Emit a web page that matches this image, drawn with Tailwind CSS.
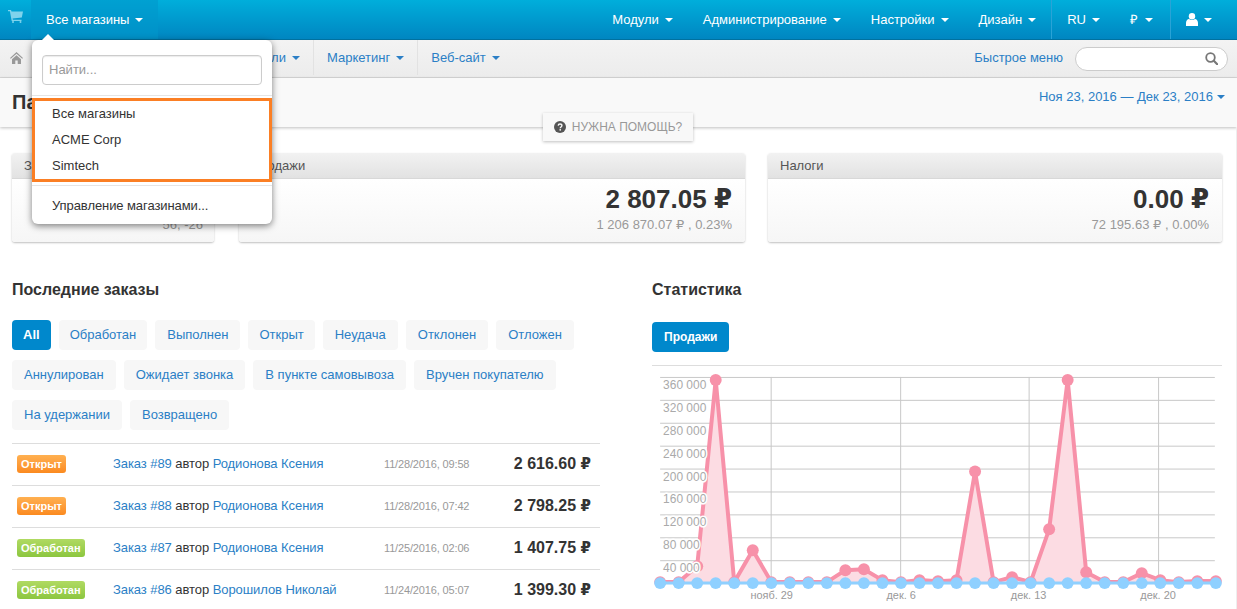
<!DOCTYPE html>
<html lang="ru">
<head>
    <meta charset="UTF-8">
    <title>Панель управления</title>
    <script src="https://cdn.jsdelivr.net/npm/@tailwindcss/browser@4"></script>
</head>
<body class="relative h-[609px] overflow-hidden bg-white font-['Liberation_Sans',Arial,sans-serif] text-[13px] text-[#333]">
    <!-- Top bar -->
    <div class="flex h-10 items-stretch justify-between border-b border-[#00719f] bg-gradient-to-b from-[#00aedb] to-[#0086c1] text-white">
        <div class="flex items-stretch">
            <div class="flex w-[31px] items-start justify-center pt-[10px]">
                <svg class="h-[13px] w-[15px] text-[#7fd3ec]" viewBox="0 0 15 13" fill="currentColor"><path d="M0 0h3l.5 1.500H15l-1.200 6L4.600 8.600l.3 1.100H13.500V11H3.700L1.900 1.300H0z"/><circle cx="5" cy="12" r="1"/><circle cx="12.500" cy="12" r="1"/></svg>
            </div>
            <div class="flex w-[127px] items-center bg-[#0098cb]/60 pl-[15px]">
                Все магазины
                <span class="ml-[6px] inline-block border-x-[4px] border-t-[4px] border-x-transparent border-t-white"></span>
            </div>
        </div>
        <div class="flex items-stretch pr-[10px]">
            <div class="flex items-center px-[15px]">Модули<span class="ml-[6px] inline-block border-x-[4px] border-t-[4px] border-x-transparent border-t-white"></span></div>
            <div class="flex items-center px-[15px]">Администрирование<span class="ml-[6px] inline-block border-x-[4px] border-t-[4px] border-x-transparent border-t-white"></span></div>
            <div class="flex items-center px-[15px]">Настройки<span class="ml-[6px] inline-block border-x-[4px] border-t-[4px] border-x-transparent border-t-white"></span></div>
            <div class="flex items-center px-[15px]">Дизайн<span class="ml-[6px] inline-block border-x-[4px] border-t-[4px] border-x-transparent border-t-white"></span></div>
            <div class="flex items-center border-l border-[#2aa3d6] pl-[15px] pr-[13px]">RU<span class="ml-[6px] inline-block border-x-[4px] border-t-[4px] border-x-transparent border-t-white"></span></div>
            <div class="flex items-center pl-[17px] pr-[17px]">₽<span class="ml-[7px] inline-block border-x-[4px] border-t-[4px] border-x-transparent border-t-white"></span></div>
            <div class="flex items-center border-l border-[#2aa3d6] px-[15px]">
                <svg class="h-[13px] w-[12px]" viewBox="0 0 12 13" fill="currentColor"><circle cx="6" cy="3.300" r="3.200"/><path d="M0 13v-3C0 7.800 1.400 6 3 6c.8.700 1.800 1 3 1s2.200-.3 3-1c1.600 0 3 1.800 3 4v3z"/></svg>
                <span class="ml-[6px] inline-block border-x-[4px] border-t-[4px] border-x-transparent border-t-white"></span>
            </div>
        </div>
    </div>

    <!-- Sub nav -->
    <div class="flex h-[38px] items-stretch justify-between border-b border-[#d8d8d8] bg-gradient-to-b from-[#f3f3f3] to-[#ececec] pb-[2px] text-[#2b7fc6]">
        <div class="flex items-stretch">
            <div class="flex w-[314px] items-center justify-between border-r border-[#e2e2e2] pl-[10px] pr-[13px]">
                <svg class="h-[12px] w-[13px] text-[#999]" viewBox="0 0 13 12" fill="currentColor"><path d="M6.500 0 13 6l-.8.800L6.500 1.700.8 6.800 0 6z"/><path d="M2 7.200 6.500 3.200l4.500 4V12H7.700V8.500H5.300V12H2z"/></svg>
                <span>Заказы</span>
                <span>Товары</span>
                <span class="flex items-center">Покупатели<span class="ml-[6px] inline-block border-x-[4px] border-t-[4px] border-x-transparent border-t-[#2b7fc6]"></span></span>
            </div>
            <div class="flex items-center border-r border-[#e2e2e2] px-[13px]">Маркетинг<span class="ml-[6px] inline-block border-x-[4px] border-t-[4px] border-x-transparent border-t-[#2b7fc6]"></span></div>
            <div class="flex items-center px-[13px]">Веб-сайт<span class="ml-[6px] inline-block border-x-[4px] border-t-[4px] border-x-transparent border-t-[#2b7fc6]"></span></div>
        </div>
        <div class="flex items-center pr-[9px] pt-[2px]">
            <span class="mb-[2px] mr-3">Быстрое меню</span>
            <div class="flex h-[24px] w-[153px] items-center justify-end rounded-full border border-[#ccc] bg-white pr-[9px]">
                <svg class="h-[13px] w-[13px] text-[#777]" viewBox="0 0 13 13" fill="none" stroke="currentColor"><circle cx="5.500" cy="5.500" r="4.300" stroke-width="1.800"/><path d="m8.800 8.800 3.400 3.400" stroke-width="2.200" stroke-linecap="round"/></svg>
            </div>
        </div>
    </div>

    <!-- Page title -->
    <div class="flex h-[49px] items-start justify-between bg-[#f9f9f9] pl-3 pr-[12px] shadow-[0_1px_3px_rgba(0,0,0,0.25)]">
        <h1 class="mt-[12px] text-[20px] font-bold leading-6">Панель управления</h1>
        <div class="mt-[9px] flex items-center text-[#2b7fc6]">Ноя 23, 2016 — Дек 23, 2016<span class="ml-[4px] inline-block border-x-[4px] border-t-[4px] border-x-transparent border-t-[#2b7fc6]"></span></div>
    </div>

    <!-- Stat cards -->
    <div class="mt-[26px] flex pl-3 pr-[15px]">
        <div class="h-[89px] w-[202px] overflow-hidden rounded-[3px] shadow-[0_1px_2px_rgba(0,0,0,0.25)]">
            <div class="flex h-[26px] items-center border-b border-[#d8d8d8] bg-gradient-to-b from-[#f2f2f2] to-[#e2e2e2] px-3 text-[#555]">Заказы</div>
            <div class="h-[63px] bg-gradient-to-b from-white to-[#f6f6f6] px-[11px] pt-[2px] text-right">
                <div class="text-[26px] font-bold leading-[36px]">4</div>
                <div class="leading-4 text-[#999]">56, -26</div>
            </div>
        </div>
        <div class="ml-[25px] h-[89px] w-[506px] overflow-hidden rounded-[3px] shadow-[0_1px_2px_rgba(0,0,0,0.25)]">
            <div class="flex h-[26px] items-center border-b border-[#d8d8d8] bg-gradient-to-b from-[#f2f2f2] to-[#e2e2e2] px-3 text-[#555]">Продажи</div>
            <div class="h-[63px] bg-gradient-to-b from-white to-[#f6f6f6] px-[13px] pt-[2px] text-right">
                <div class="text-[26px] font-bold leading-[36px]">2 807.05 <span class="font-['DejaVu_Sans',sans-serif]">₽</span></div>
                <div class="leading-4 text-[#999]">1 206 870.07 <span class="font-['DejaVu_Sans',sans-serif]">₽</span> , 0.23%</div>
            </div>
        </div>
        <div class="ml-[23px] h-[89px] flex-1 overflow-hidden rounded-[3px] shadow-[0_1px_2px_rgba(0,0,0,0.25)]">
            <div class="flex h-[26px] items-center border-b border-[#d8d8d8] bg-gradient-to-b from-[#f2f2f2] to-[#e2e2e2] px-3 text-[#555]">Налоги</div>
            <div class="h-[63px] bg-gradient-to-b from-white to-[#f6f6f6] px-[13px] pt-[2px] text-right">
                <div class="text-[26px] font-bold leading-[36px]">0.00 <span class="font-['DejaVu_Sans',sans-serif]">₽</span></div>
                <div class="leading-4 text-[#999]">72 195.63 <span class="font-['DejaVu_Sans',sans-serif]">₽</span> , 0.00%</div>
            </div>
        </div>
    </div>

    <!-- Two columns -->
    <div class="mt-[38px] flex pl-3 pr-[15px]">
        <div class="w-[588px]">
            <h2 class="text-base font-bold leading-[20px]">Последние заказы</h2>
            <div class="mt-[20px] flex w-[588px] flex-wrap gap-x-2 gap-y-[10px] text-[#2b7fc6]">
                <span class="flex h-[30px] items-center rounded bg-[#0088cc] px-[11px] font-bold text-white">All</span>
                <span class="flex h-[30px] items-center rounded bg-[#f7f7f7] px-[11px]">Обработан</span>
                <span class="flex h-[30px] items-center rounded bg-[#f7f7f7] px-3">Выполнен</span>
                <span class="flex h-[30px] items-center rounded bg-[#f7f7f7] px-[11px]">Открыт</span>
                <span class="flex h-[30px] items-center rounded bg-[#f7f7f7] px-3">Неудача</span>
                <span class="flex h-[30px] items-center rounded bg-[#f7f7f7] px-3">Отклонен</span>
                <span class="flex h-[30px] items-center rounded bg-[#f7f7f7] px-3">Отложен</span>
                <span class="flex h-[30px] items-center rounded bg-[#f7f7f7] px-3">Аннулирован</span>
                <span class="flex h-[30px] items-center rounded bg-[#f7f7f7] px-3">Ожидает звонка</span>
                <span class="flex h-[30px] items-center rounded bg-[#f7f7f7] px-3">В пункте самовывоза</span>
                <span class="flex h-[30px] items-center rounded bg-[#f7f7f7] px-3">Вручен покупателю</span>
                <span class="flex h-[30px] items-center rounded bg-[#f7f7f7] px-3">На удержании</span>
                <span class="flex h-[30px] items-center rounded bg-[#f7f7f7] px-3">Возвращено</span>
            </div>
            <div class="mt-[13px] border-t border-[#ddd]">
                <div class="flex h-[42px] items-center border-b border-[#ddd] pb-[1px] pl-[5px] pr-[9px]">
                    <span class="w-[96px]"><span class="inline-block rounded-[3px] bg-gradient-to-b from-[#ffb050] to-[#fb8a1e] px-[4px] text-[11px] font-bold leading-[18px] text-white">Открыт</span></span>
                    <span class="w-[271px] tracking-[-0.07px]"><span class="text-[#2b7fc6]">Заказ #89</span> автор <span class="text-[#2b7fc6]">Родионова Ксения</span></span>
                    <span class="text-[11px] tracking-[-0.15px] text-[#999]">11/28/2016, 09:58</span>
                    <span class="ml-auto text-base font-bold">2 616.60 <span class="font-['DejaVu_Sans',sans-serif] text-[15px]">₽</span></span>
                </div>
                <div class="flex h-[42px] items-center border-b border-[#ddd] pb-[1px] pl-[5px] pr-[9px]">
                    <span class="w-[96px]"><span class="inline-block rounded-[3px] bg-gradient-to-b from-[#ffb050] to-[#fb8a1e] px-[4px] text-[11px] font-bold leading-[18px] text-white">Открыт</span></span>
                    <span class="w-[271px] tracking-[-0.07px]"><span class="text-[#2b7fc6]">Заказ #88</span> автор <span class="text-[#2b7fc6]">Родионова Ксения</span></span>
                    <span class="text-[11px] tracking-[-0.15px] text-[#999]">11/28/2016, 07:42</span>
                    <span class="ml-auto text-base font-bold">2 798.25 <span class="font-['DejaVu_Sans',sans-serif] text-[15px]">₽</span></span>
                </div>
                <div class="flex h-[42px] items-center border-b border-[#ddd] pb-[1px] pl-[5px] pr-[9px]">
                    <span class="w-[96px]"><span class="inline-block rounded-[3px] bg-gradient-to-b from-[#b0da62] to-[#8cc63f] px-[4px] text-[11px] font-bold leading-[18px] text-white">Обработан</span></span>
                    <span class="w-[271px] tracking-[-0.07px]"><span class="text-[#2b7fc6]">Заказ #87</span> автор <span class="text-[#2b7fc6]">Родионова Ксения</span></span>
                    <span class="text-[11px] tracking-[-0.15px] text-[#999]">11/25/2016, 02:06</span>
                    <span class="ml-auto text-base font-bold">1 407.75 <span class="font-['DejaVu_Sans',sans-serif] text-[15px]">₽</span></span>
                </div>
                <div class="flex h-[42px] items-center border-b border-[#ddd] pb-[1px] pl-[5px] pr-[9px]">
                    <span class="w-[96px]"><span class="inline-block rounded-[3px] bg-gradient-to-b from-[#b0da62] to-[#8cc63f] px-[4px] text-[11px] font-bold leading-[18px] text-white">Обработан</span></span>
                    <span class="w-[271px] tracking-[-0.07px]"><span class="text-[#2b7fc6]">Заказ #86</span> автор <span class="text-[#2b7fc6]">Ворошилов Николай</span></span>
                    <span class="text-[11px] tracking-[-0.15px] text-[#999]">11/24/2016, 05:07</span>
                    <span class="ml-auto text-base font-bold">1 399.30 <span class="font-['DejaVu_Sans',sans-serif] text-[15px]">₽</span></span>
                </div>
            </div>
        </div>
        <div class="ml-[52px] flex-1">
            <h2 class="text-base font-bold leading-[20px]">Статистика</h2>
            <div class="mt-[22px] flex">
                <span class="flex h-[30px] items-center rounded bg-[#0088cc] px-3 text-xs font-bold text-white">Продажи</span>
            </div>
            <svg id="chart" class="mt-[13px] block h-[244px] w-[570px] border-t border-[#ddd]" viewBox="652 365 570 244"></svg>
        </div>
    </div>

    <!-- Help tab -->
    <div class="absolute left-[543px] top-[113px] flex h-[28px] w-[150px] items-center justify-center bg-[#f8f8f8] text-xs text-[#999] shadow-[0_1px_3px_rgba(0,0,0,0.25)]">
        <svg class="mr-[6px] h-[12px] w-[12px] text-[#555]" viewBox="0 0 12 12"><circle cx="6" cy="6" r="6" fill="currentColor"/><path d="M4.200 4.600C4.300 3.500 5 3 6 3s1.900.6 1.900 1.600C7.900 6 6.300 6 6.300 7.200" fill="none" stroke="#f8f8f8" stroke-width="1.400"/><rect x="5.500" y="8.100" width="1.500" height="1.500" fill="#f8f8f8"/></svg>
        НУЖНА ПОМОЩЬ?
    </div>

    <!-- Stores dropdown -->
    <div class="absolute left-[32px] top-[40px] h-[184px] w-[240px] rounded-[6px] bg-white shadow-[0_2px_7px_rgba(0,0,0,0.5)]">
        <span class="absolute left-[10px] top-[-6px] border-x-[6px] border-b-[6px] border-x-transparent border-b-white"></span>
        <div class="px-[10px] pt-[15px]">
            <div class="flex h-[30px] items-center rounded border border-[#ccc] px-[6px] text-[#999] shadow-[inset_0_1px_1px_rgba(0,0,0,0.08)]">Найти...</div>
        </div>
        <div class="mt-[10px] border-t border-[#e5e5e5]"></div>
        <div class="mt-[2px] flex h-[84px] flex-col justify-center border-[3px] border-[#fb7f24] pl-[17px] text-[#333]">
            <div class="leading-[26px]">Все магазины</div>
            <div class="leading-[26px]">ACME Corp</div>
            <div class="leading-[26px]">Simtech</div>
        </div>
        <div class="mt-[3px] border-t border-[#e5e5e5]"></div>
        <div class="pl-[20px] pt-[10px] leading-[20px] tracking-[-0.08px]">Управление магазинами...</div>
    </div>

    <!-- Page edge -->
    <div class="absolute bottom-0 right-0 top-[127px] w-px bg-[#eee]"></div>

    <script>
        // Sales chart
        const svg = document.getElementById('chart');
        const ns = 'http://www.w3.org/2000/svg';
        const pink = [582,582,566,379,582,550,582,582,582,582,570,569,580,582,580,581,580,471,582,577,582,529,379,572,582,582,573,580,582,581,581];
        const xAt = i => 659 + 18.6 * i;

        function add(tag, attrs, text) {
            const el = document.createElementNS(ns, tag);
            for (const k in attrs) el.setAttribute(k, attrs[k]);
            if (text) el.textContent = text;
            svg.appendChild(el);
        }

        // Grid
        for (let i = 0; i < 10; i++) {
            const y = 376.5 + 23 * i;
            add('line', { x1: 659, x2: 1216, y1: y, y2: y, stroke: '#c8c8c8' });
        }
        [770.5, 900.5, 1029.5, 1159.5].forEach(x => add('line', { x1: x, x2: x, y1: 376, y2: 583, stroke: '#c8c8c8' }));

        // Pink series
        const pts = pink.map((y, i) => xAt(i) + ',' + y).join(' ');
        add('polygon', { points: '659,582 ' + pts + ' 1217,582', fill: '#fcdce3' });
        add('polyline', { points: pts, fill: 'none', stroke: '#f791a9', 'stroke-width': 4 });
        pink.forEach((y, i) => add('circle', { cx: xAt(i), cy: y, r: 6, fill: '#f791a9' }));

        // Blue series
        add('line', { x1: 659, x2: 1217, y1: 583, y2: 583, stroke: '#8fd0ff', 'stroke-width': 3 });
        pink.forEach((y, i) => add('circle', { cx: xAt(i), cy: 583, r: 6, fill: '#8fd0ff' }));

        // Labels
        ['360 000','320 000','280 000','240 000','200 000','160 000','120 000','80 000','40 000'].forEach((t, i) => {
            add('text', { x: 662, y: 388 + 23 * i, 'font-size': 12, fill: '#aaa', stroke: '#fff', 'stroke-width': 3, 'paint-order': 'stroke', 'stroke-linejoin': 'round' }, t);
        });
        [['нояб. 29', 771], ['дек. 6', 901], ['дек. 13', 1029], ['дек. 20', 1159]].forEach(([t, x]) => {
            add('text', { x: x, y: 599, 'font-size': 11, fill: '#999', 'text-anchor': 'middle' }, t);
        });
    </script>
</body>
</html>
